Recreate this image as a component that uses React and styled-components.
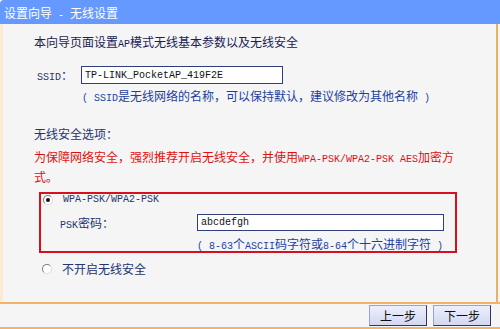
import React from "react";
import styled, { createGlobalStyle } from "styled-components";

const GlobalStyle = createGlobalStyle`
  body {
    margin: 0;
    background: #fff;
    font-family: "Noto Sans CJK SC", "Liberation Sans", sans-serif;
    font-size: 12px;
  }
`;

const Page = styled.div`
  width: 500px;
  height: 329px;
  display: flex;
  flex-direction: column;
  background: #f5f5f5;
  overflow: hidden;
`;

const TitleBar = styled.div`
  height: 24px;
  line-height: 24px;
  padding: 1px 0 0 4px;
  box-sizing: border-box;
  background: #6699ff;
  color: #fff;
  border-top-left-radius: 4px;
  white-space: nowrap;
`;

const Body = styled.div`
  flex: 1;
  margin-right: 2px;
  padding: 10px 0 0 31px;
  border-left: 3px solid #fcebd2;
  border-right: 2px solid #eab066;
  display: flex;
  flex-direction: column;
  align-items: flex-start;
`;

// ASCII runs: half-width like the original bitmap font
const Asc = styled.span`
  font-family: "Liberation Mono", monospace;
  font-size: 10px;
  line-height: 1;
`;

const Intro = styled.div`
  height: 16px;
  line-height: 16px;
  color: #1b2152;
  white-space: nowrap;
`;

const FieldRow = styled.div`
  display: flex;
  align-items: center;
  height: ${(p) => p.$h}px;
  margin-top: ${(p) => p.$top || 0}px;
  margin-left: ${(p) => p.$left || 0}px;
`;

const Label = styled.span`
  width: ${(p) => p.$w}px;
  line-height: 16px;
  color: #233470;
  white-space: nowrap;
`;

const TextBox = styled.input`
  width: ${(p) => p.$w}px;
  height: ${(p) => p.$h}px;
  box-sizing: border-box;
  margin: 0;
  padding: 0 0 0 3px;
  border: 1px solid #2e3f7c;
  background: #fff;
  font-family: "Liberation Mono", monospace;
  font-size: 10px;
  color: #111;
  outline: none;
`;

const Hint = styled.div`
  height: ${(p) => p.$lh || 16}px;
  margin-top: ${(p) => p.$top}px;
  margin-left: ${(p) => p.$left}px;
  line-height: ${(p) => p.$lh || 16}px;
  color: #1c3fa0;
  white-space: nowrap;
`;

const SectionLabel = styled.div`
  height: 16px;
  margin-top: 22px;
  line-height: 16px;
  color: #233470;
`;

const Warning = styled.div`
  margin-top: 5px;
  height: 40px;
  line-height: 20px;
  color: #e01010;
  white-space: nowrap;
`;

const SecBox = styled.div`
  margin: 5px 0 0 5px;
  width: 418px;
  height: 61px;
  box-sizing: border-box;
  border: 2px solid #d80f1c;
  padding: 0 0 0 2px;
  display: flex;
  flex-direction: column;
  align-items: flex-start;
`;

const RadioRow = styled.label`
  display: flex;
  align-items: center;
  height: 12px;
  gap: ${(p) => p.$gap}px;
  margin-top: ${(p) => p.$top || 0}px;
  margin-left: ${(p) => p.$left || 0}px;
  line-height: 12px;
  color: #233470;
  white-space: nowrap;
`;

const Radio = styled.span`
  position: relative;
  flex: none;
  width: 10px;
  height: 10px;
  box-sizing: border-box;
  border-radius: 50%;
  border: 1px solid;
  border-color: #7d7d7d #dcdcdc #dcdcdc #7d7d7d;
  background: #fff;

  &::after {
    content: "";
    display: ${(p) => (p.$on ? "block" : "none")};
    position: absolute;
    left: 2px;
    top: 2px;
    width: 4px;
    height: 4px;
    border-radius: 50%;
    background: #111;
  }
`;

const Footer = styled.div`
  height: 27px;
  flex: none;
  box-sizing: border-box;
  border-top: 2px solid #f2b469;
  border-bottom: 2px solid #f2b469;
  display: flex;
  justify-content: flex-end;
  align-items: center;
  gap: 6px;
  padding-right: 9px;
`;

const StepButton = styled.button`
  width: 58px;
  height: 21px;
  margin: 0;
  padding: 0;
  border: 1px solid;
  border-color: #9aa3d0 #2a3672 #2a3672 #9aa3d0;
  background: linear-gradient(#eceffc, #d3d8f1);
  font-family: "Noto Sans CJK SC", sans-serif;
  font-size: 12px;
  color: #111;
  cursor: pointer;
`;

export default function App() {
  return (
    <Page>
      <GlobalStyle />
      <TitleBar>
        设置向导<Asc> - </Asc>无线设置
      </TitleBar>
      <Body>
        <Intro>
          本向导页面设置<Asc>AP</Asc>模式无线基本参数以及无线安全
        </Intro>

        <FieldRow $h={18} $top={16} $left={3}>
          <Label $w={44}>
            <Asc>SSID</Asc>：
          </Label>
          <TextBox $w={202} $h={18} readOnly value="TP-LINK_PocketAP_419F2E" />
        </FieldRow>
        <Hint $top={4} $left={48}>
          <Asc>( SSID</Asc>是无线网络的名称，可以保持默认，建议修改为其他名称<Asc> )</Asc>
        </Hint>

        <SectionLabel>无线安全选项：</SectionLabel>
        <Warning>
          为保障网络安全，强烈推荐开启无线安全，并使用<Asc>WPA-PSK/WPA2-PSK AES</Asc>加密方
          <br />
          式。
        </Warning>

        <SecBox>
          <RadioRow $gap={10}>
            <Radio $on />
            <Asc>WPA-PSK/WPA2-PSK</Asc>
          </RadioRow>
          <FieldRow $h={17} $top={9} $left={17}>
            <Label $w={137}>
              <Asc>PSK</Asc>密码：
            </Label>
            <TextBox $w={247} $h={17} readOnly value="abcdefgh" />
          </FieldRow>
          <Hint $top={6} $left={154} $lh={14}>
            <Asc>( 8-63</Asc>个<Asc>ASCII</Asc>码字符或<Asc>8-64</Asc>个十六进制字符<Asc> )</Asc>
          </Hint>
        </SecBox>

        <RadioRow $gap={10} $top={10} $left={8}>
          <Radio />
          不开启无线安全
        </RadioRow>
      </Body>
      <Footer>
        <StepButton>上一步</StepButton>
        <StepButton>下一步</StepButton>
      </Footer>
    </Page>
  );
}
